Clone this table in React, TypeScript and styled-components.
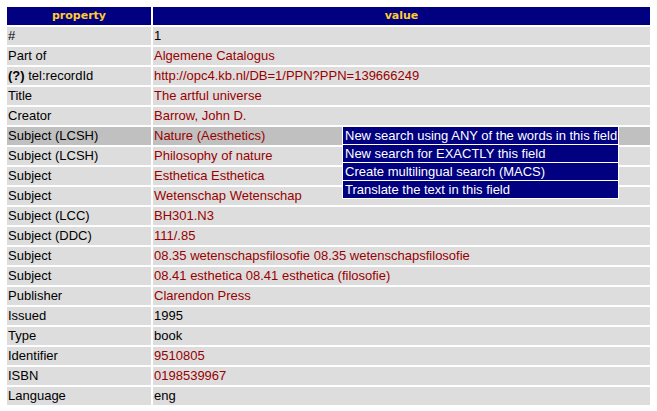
import React from "react";
import styled, { createGlobalStyle } from "styled-components";

const GlobalStyle = createGlobalStyle`
  html, body {
    margin: 0;
    padding: 0;
    background: #ffffff;
  }
  body {
    font-family: "Liberation Sans", Arial, sans-serif;
    font-size: 13px;
  }
`;

// Outer wrapper, keeps the table off the page edges
const Page = styled.div`
  padding: 5px 5px 4px;
`;

const RecordTable = styled.table`
  width: 647px;
  border-collapse: separate;
  border-spacing: 2px;
  table-layout: fixed;
`;

const HeadCell = styled.th<{ $w?: number }>`
  width: ${(p) => (p.$w ? `${p.$w}px` : "auto")};
  height: 18px;
  padding: 0;
  background: #000080;
  color: #ffcc33;
  font-family: "DejaVu Sans", Verdana, sans-serif;
  font-size: 11px;
  font-weight: bold;
  text-align: center;
  line-height: 18px;
`;

const Cell = styled.td<{ $active?: boolean; $link?: boolean }>`
  position: relative;
  height: 18px;
  padding: 0 1px;
  background: ${(p) => (p.$active ? "#c0c0c0" : "#dddddd")};
  color: ${(p) => (p.$link ? "#990000" : "#000000")};
  font-family: "Liberation Sans", Arial, sans-serif;
  font-size: 13px;
  line-height: 18px;
  white-space: nowrap;
  vertical-align: middle;
`;

const Hint = styled.b`
  font-weight: bold;
`;

// Context menu that lies over the rows below the active field
const Menu = styled.div`
  position: absolute;
  left: 189px;
  top: -1px;
  width: 275px;
  display: flex;
  flex-direction: column;
  gap: 1px;
  border: 1px solid #ffffff;
  background: #ffffff;
  z-index: 2;
`;

const MenuItem = styled.div`
  height: 17px;
  padding: 0 2px;
  background: #000080;
  color: #ffffff;
  font-family: "Liberation Sans", Arial, sans-serif;
  font-size: 13px;
  line-height: 17px;
  white-space: nowrap;
  overflow: hidden;
  cursor: pointer;
`;

interface IRow {
  label: string;
  value: string;
  link?: boolean;
  hint?: boolean;
  active?: boolean;
}

const rows: IRow[] = [
  { label: "#", value: "1" },
  { label: "Part of", value: "Algemene Catalogus", link: true },
  { label: "tel:recordId", value: "http://opc4.kb.nl/DB=1/PPN?PPN=139666249", link: true, hint: true },
  { label: "Title", value: "The artful universe", link: true },
  { label: "Creator", value: "Barrow, John D.", link: true },
  { label: "Subject (LCSH)", value: "Nature (Aesthetics)", link: true, active: true },
  { label: "Subject (LCSH)", value: "Philosophy of nature", link: true },
  { label: "Subject", value: "Esthetica Esthetica", link: true },
  { label: "Subject", value: "Wetenschap Wetenschap", link: true },
  { label: "Subject (LCC)", value: "BH301.N3", link: true },
  { label: "Subject (DDC)", value: "111/.85", link: true },
  { label: "Subject", value: "08.35 wetenschapsfilosofie 08.35 wetenschapsfilosofie", link: true },
  { label: "Subject", value: "08.41 esthetica 08.41 esthetica (filosofie)", link: true },
  { label: "Publisher", value: "Clarendon Press", link: true },
  { label: "Issued", value: "1995" },
  { label: "Type", value: "book" },
  { label: "Identifier", value: "9510805", link: true },
  { label: "ISBN", value: "0198539967", link: true },
  { label: "Language", value: "eng" },
];

const menuItems = [
  "New search using ANY of the words in this field",
  "New search for EXACTLY this field",
  "Create multilingual search (MACS)",
  "Translate the text in this field",
];

export default function App() {
  return (
    <>
      <GlobalStyle />
      <Page>
        <RecordTable>
          <thead>
            <tr>
              <HeadCell $w={144}>property</HeadCell>
              <HeadCell>value</HeadCell>
            </tr>
          </thead>
          <tbody>
            {rows.map((row, idx) => (
              <tr key={idx}>
                <Cell $active={row.active}>
                  {row.hint && <Hint>(?)</Hint>}
                  {row.hint ? " " : ""}
                  {row.label}
                </Cell>
                <Cell $active={row.active} $link={row.link}>
                  {row.value}
                  {row.active && (
                    <Menu>
                      {menuItems.map((m) => (
                        <MenuItem key={m}>{m}</MenuItem>
                      ))}
                    </Menu>
                  )}
                </Cell>
              </tr>
            ))}
          </tbody>
        </RecordTable>
      </Page>
    </>
  );
}
